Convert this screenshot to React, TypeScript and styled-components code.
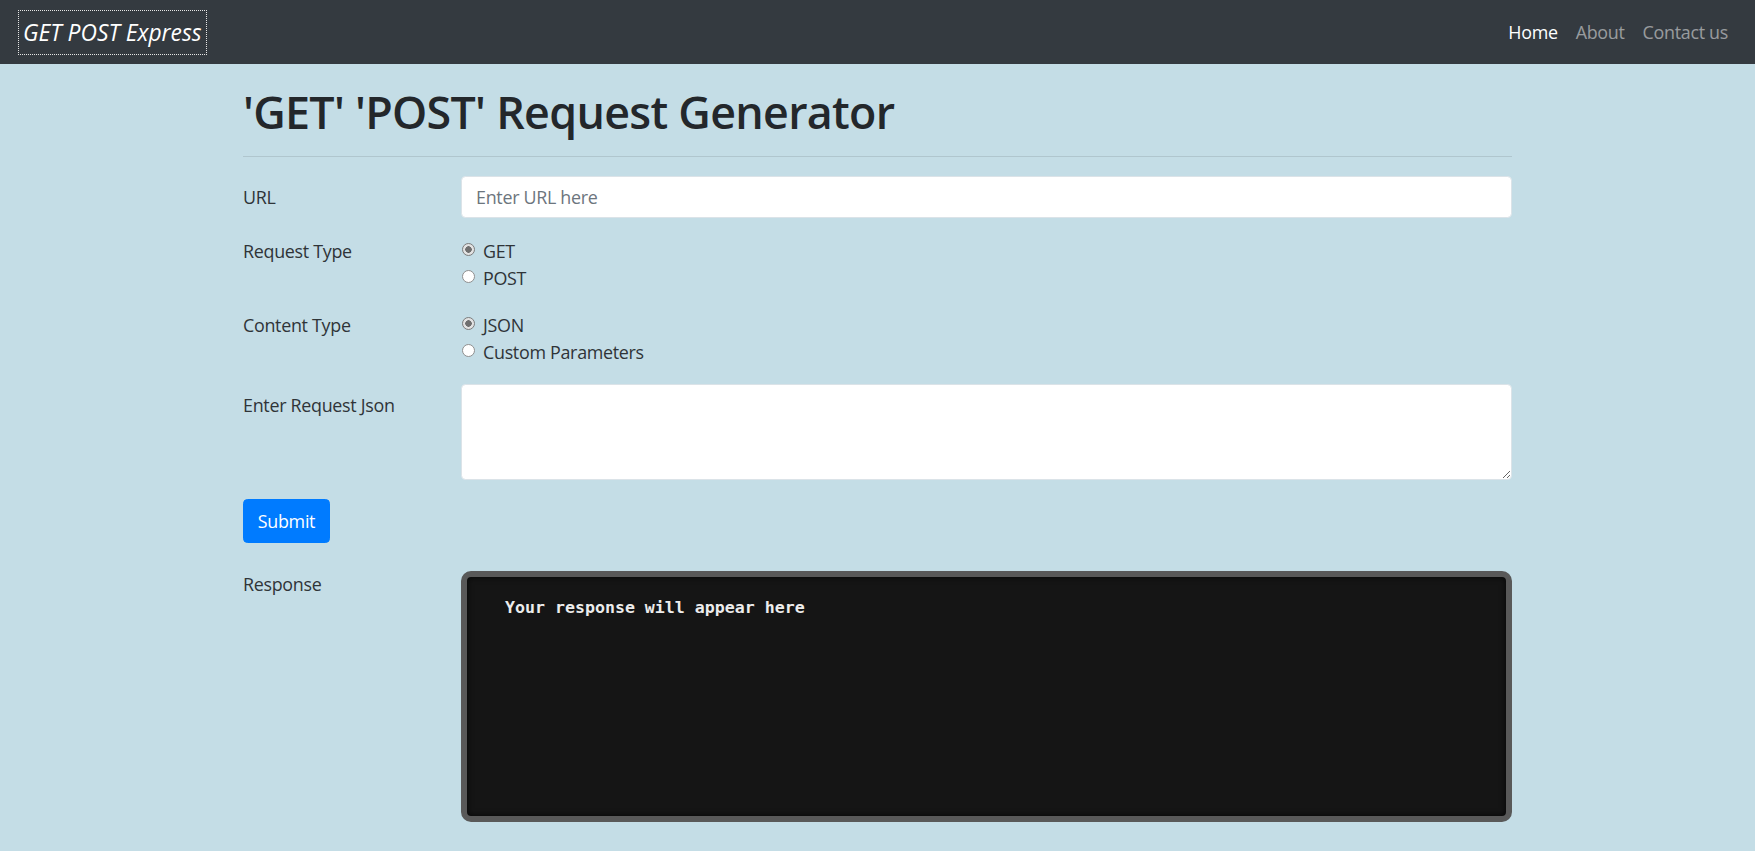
import React from "react";
import styled, { createGlobalStyle } from "styled-components";

const GlobalStyle = createGlobalStyle`
  * { box-sizing: border-box; }
  body {
    margin: 0;
    background: #c4dde6;
    font-family: "Open Sans", "Noto Sans", "Liberation Sans", sans-serif;
    font-size: 17.9px;
    line-height: 1.5;
    color: #212529;
  }
`;

const NavBar = styled.nav`
  height: 64px;
  background: #343a40;
  display: flex;
  align-items: center;
  justify-content: space-between;
  padding: 0 18px 0 19px;
`;

const Brand = styled.a`
  display: block;
  color: #fff;
  font-style: italic;
  font-size: 22.8px;
  line-height: 33px;
  padding: 5px 4px 5px 4px;
  outline: 1px dotted #e6e6e6;
  text-decoration: none;
  letter-spacing: 0;
`;

const NavList = styled.div`
  display: flex;
  align-items: center;
`;

const NavLink = styled.a<{ $active?: boolean }>`
  color: ${(p) => (p.$active ? "#ffffff" : "rgba(255,255,255,0.5)")};
  padding: 9px 9px;
  text-decoration: none;
  font-size: 17.9px;
  letter-spacing: -0.3px;
`;

const Container = styled.main`
  width: 1269px;
  margin: 0 auto;
  padding-top: 21px;
  padding-bottom: 30px;
`;

const Title = styled.h1`
  margin: 0;
  font-size: 44.8px;
  font-weight: 600;
  line-height: 1.2;
  color: #23272b;
  letter-spacing: -0.7px;
`;

const Rule = styled.hr`
  margin: 17px 0 19px;
  border: 0;
  border-top: 1px solid rgba(0, 0, 0, 0.1);
`;

const Form = styled.form`
  display: flex;
  flex-direction: column;
`;

const Row = styled.div<{ $gap?: number }>`
  display: grid;
  grid-template-columns: 218px 1fr;
  align-items: start;
  margin-top: ${(p) => p.$gap ?? 0}px;
`;

const Label = styled.label<{ $pad?: number }>`
  padding-top: ${(p) => p.$pad ?? 0}px;
  color: #2f3438;
  line-height: 27px;
  letter-spacing: -0.3px;
`;

const TextInput = styled.input`
  height: 42px;
  width: 100%;
  padding: 6px 14px;
  border: 1px solid #dbe3e8;
  border-radius: 4.5px;
  background: #fff;
  font-family: inherit;
  font-size: 17.9px;
  color: #495057;
  letter-spacing: -0.3px;
  &::placeholder { color: #6c757d; }
`;

const RadioGroup = styled.div`
  display: flex;
  flex-direction: column;
`;

const RadioLine = styled.label`
  display: flex;
  align-items: center;
  height: 27px;
  line-height: 27px;
  color: #2f3438;
  letter-spacing: -0.3px;
`;

const Radio = styled.input`
  appearance: none;
  width: 13px;
  height: 13px;
  margin: 0 8px 0 1px;
  border-radius: 50%;
  border: 1px solid #8f8f8f;
  background: #fff;
  position: relative;
  top: -2px;
  &:checked {
    background: radial-gradient(circle, #6f6f6f 0 3px, #e2e2e2 3.5px);
    border-color: #7c7c7c;
  }
`;

const TextArea = styled.textarea`
  width: 100%;
  height: 96px;
  border: 1px solid #dbe3e8;
  border-radius: 4.5px;
  background: #fff;
  font-family: inherit;
  font-size: 17.9px;
  padding: 6px 14px;
  resize: vertical;
  display: block;
`;

const ButtonRow = styled.div<{ $gap?: number }>`
  margin-top: ${(p) => p.$gap ?? 0}px;
`;

const SubmitButton = styled.button`
  width: 87px;
  height: 44px;
  border: 1px solid #007bff;
  background: #007bff;
  color: #fff;
  border-radius: 4.5px;
  font-family: inherit;
  font-size: 17.9px;
  letter-spacing: -0.3px;
  padding: 0;
  cursor: pointer;
`;

const Terminal = styled.pre`
  margin: 0;
  height: 251px;
  border: 6px solid #595959;
  border-radius: 10px;
  background: #151515;
  box-shadow: inset 0 0 6px rgba(0, 0, 0, 0.8);
  color: #ececec;
  font-family: "DejaVu Sans Mono", "Liberation Mono", monospace;
  font-weight: bold;
  font-size: 16.6px;
  line-height: 25px;
  padding: 18px 38px;
`;

export default function App() {
  return (
    <>
      <GlobalStyle />
      <NavBar>
        <Brand href="#">GET POST Express</Brand>
        <NavList>
          <NavLink $active href="#">Home</NavLink>
          <NavLink href="#">About</NavLink>
          <NavLink href="#">Contact us</NavLink>
        </NavList>
      </NavBar>
      <Container>
        <Title>'GET' 'POST' Request Generator</Title>
        <Rule />
        <Form onSubmit={(e) => e.preventDefault()}>
          <Row>
            <Label $pad={8}>URL</Label>
            <TextInput placeholder="Enter URL here" />
          </Row>
          <Row $gap={20}>
            <Label>Request Type</Label>
            <RadioGroup>
              <RadioLine>
                <Radio type="radio" name="req" defaultChecked />
                GET
              </RadioLine>
              <RadioLine>
                <Radio type="radio" name="req" />
                POST
              </RadioLine>
            </RadioGroup>
          </Row>
          <Row $gap={20}>
            <Label>Content Type</Label>
            <RadioGroup>
              <RadioLine>
                <Radio type="radio" name="ct" defaultChecked />
                JSON
              </RadioLine>
              <RadioLine>
                <Radio type="radio" name="ct" />
                Custom Parameters
              </RadioLine>
            </RadioGroup>
          </Row>
          <Row $gap={18}>
            <Label $pad={8}>Enter Request Json</Label>
            <TextArea />
          </Row>
          <ButtonRow $gap={19}>
            <SubmitButton type="submit">Submit</SubmitButton>
          </ButtonRow>
          <Row $gap={28}>
            <Label>Response</Label>
            <Terminal>Your response will appear here</Terminal>
          </Row>
        </Form>
      </Container>
    </>
  );
}
